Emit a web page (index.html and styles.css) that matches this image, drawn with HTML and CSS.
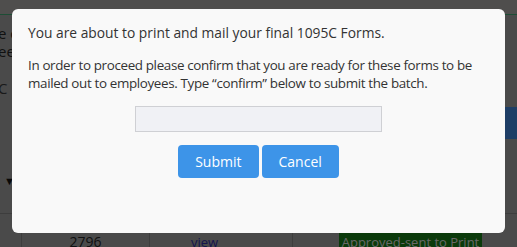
FILE: index.html
```html
<!DOCTYPE html>
<html lang="en">
<head>
<meta charset="UTF-8">
<title>Print 1095C Forms</title>
<link rel="stylesheet" href="styles.css">
</head>
<body>
<div class="page">
  <div class="topbar"></div>
  <div class="content">
    <div class="intro">
      <p>e c<br>ee</p>
      <p class="form-code">C</p>
      <span class="filter">&#9660;</span>
    </div>
    <div class="actions">
      <button class="generate">te</button>
    </div>
  </div>
  <div class="batch-row">
    <div class="cell"></div>
    <div class="cell">2796</div>
    <div class="cell view-cell"><a href="#">view</a></div>
    <div class="cell status-cell"><span class="status">Approved-sent to Print</span></div>
  </div>
</div>

<div class="backdrop"></div>

<div class="modal">
  <p>You are about to print and mail your final 1095C Forms.</p>
  <p class="confirm-text">In order to proceed please confirm that you are ready for these forms to be<br>mailed out to employees. Type &ldquo;confirm&rdquo; below to submit the batch.</p>
  <div class="confirm-row">
    <input type="text" class="confirm-input">
  </div>
  <div class="button-row">
    <button class="btn">Submit</button>
    <button class="btn">Cancel</button>
  </div>
</div>
</body>
</html>
```

FILE: styles.css
```css
html, body {
  margin: 0;
  padding: 0;
  height: 100%;
  overflow: hidden;
}
body {
  font-family: "Open Sans", "Liberation Sans", sans-serif;
  background: #949494;
  color: #222;
}
.page {
  width: 517px;
}
.topbar {
  height: 14px;
  background: #9e9c9a;
  border-bottom: 1px solid #3a9a6a;
}
.content {
  display: flex;
  justify-content: space-between;
  height: 198px;
  border-bottom: 1px solid #7a7a7a;
}
.intro {
  margin-left: -2px;
  font-size: 15px;
  color: #222;
}
.intro p {
  margin: 9px 0 0;
  line-height: 18px;
}
.form-code {
  margin-top: 19px !important;
  color: #333;
}
.filter {
  display: block;
  margin: 76px 0 0 6px;
  font-size: 11px;
  color: #111;
}
.actions {
  padding-top: 92px;
}
.generate {
  height: 32px;
  width: 40px;
  border: none;
  background: #3d7dcc;
  color: #d8d8d8;
  font-family: inherit;
  font-size: 15px;
  padding: 0 0 0 10px;
  text-align: left;
}
.batch-row {
  display: grid;
  grid-template-columns: 21px 128px 143px 1fr;
  height: 34px;
  font-size: 14px;
  overflow: hidden;
}
.cell {
  border-left: 1px solid #7a7a7a;
  text-align: center;
  line-height: 20px;
  padding-top: 18px;
}
.cell:first-child {
  border-left: none;
}
.view-cell {
  text-align: left;
  padding-left: 41px;
}
.cell a {
  color: #2a2a9a;
  text-decoration: none;
  font-size: 13px;
}
.status-cell {
  text-align: left;
  padding-left: 46px;
  padding-top: 15px;
}
.status {
  display: inline-block;
  width: 143px;
  background: #167516;
  color: #d0d0d0;
  text-align: center;
  line-height: 20px;
  padding: 3px 0 4px;
  font-size: 13px;
}

.backdrop {
  position: fixed;
  inset: 0;
  background: rgba(0, 0, 0, 0.5);
}
.modal {
  position: fixed;
  left: 12px;
  top: 9px;
  width: 493px;
  height: 224px;
  box-sizing: border-box;
  padding: 15px 16px;
  background: #f9f9f9;
  border-radius: 6px;
  color: #333;
  font-size: 13.8px;
  line-height: 18px;
}
.modal p {
  margin: 0 0 14px;
}
.confirm-text {
  white-space: nowrap;
  font-size: 13.4px;
  letter-spacing: -0.35px;
}
.confirm-row {
  display: flex;
  justify-content: center;
  margin-top: 14px;
}
.confirm-input {
  width: 247px;
  height: 26px;
  box-sizing: border-box;
  border: 1px solid #cfd0d4;
  background: #f0f1f5;
  margin: 0;
}
.button-row {
  display: flex;
  justify-content: center;
  gap: 3px;
  margin-top: 13px;
}
.btn {
  height: 33px;
  padding: 0 17px;
  border: none;
  border-radius: 4px;
  background: #3d94e8;
  color: #fff;
  font-family: inherit;
  font-size: 14px;
}
```
